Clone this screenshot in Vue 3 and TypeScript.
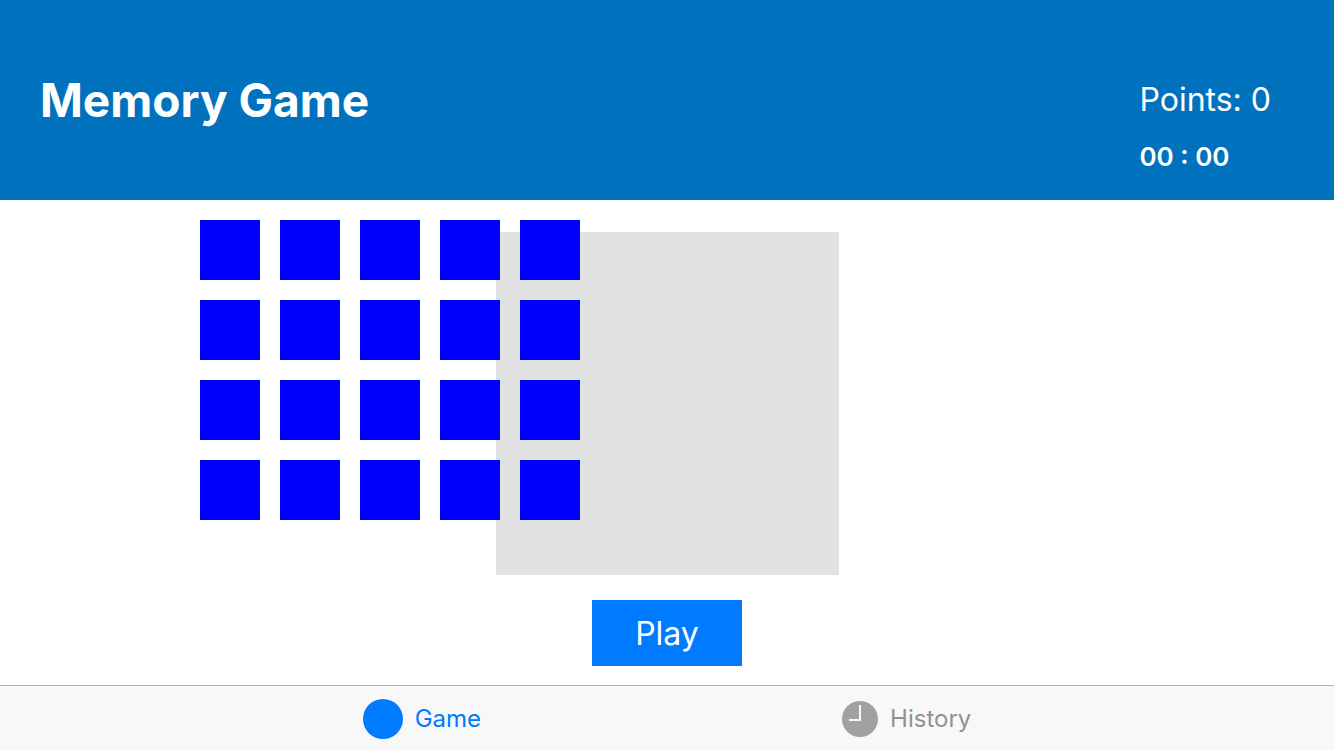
<script setup lang="ts">
import { ref } from 'vue'

const points = ref(0)
const minutes = ref(0)
const seconds = ref(0)
const cardCount = 20
const activeTab = ref<'game' | 'history'>('game')

const pad = (value: number): string => String(value).padStart(2, '0')
</script>

<template>
  <div class="app">
    <header class="header">
      <h1 class="title">Memory Game</h1>
      <div class="status">
        <p class="points">Points: {{ points }}</p>
        <p class="timer">{{ pad(minutes) }} : {{ pad(seconds) }}</p>
      </div>
    </header>

    <main class="main">
      <div class="stage">
        <div class="board"></div>
        <div class="cards">
          <button
            v-for="n in cardCount"
            :key="n"
            type="button"
            class="card"
            :aria-label="`Card ${n}`"
          ></button>
        </div>
      </div>
      <button type="button" class="play">Play</button>
    </main>

    <nav class="tabs">
      <button
        type="button"
        class="tab"
        :class="{ active: activeTab === 'game' }"
        @click="activeTab = 'game'"
      >
        <svg class="icon-game" viewBox="0 0 40 40" aria-hidden="true">
          <circle cx="20" cy="20" r="20" fill="currentColor" />
        </svg>
        <span>Game</span>
      </button>
      <button
        type="button"
        class="tab"
        :class="{ active: activeTab === 'history' }"
        @click="activeTab = 'history'"
      >
        <svg class="icon-history" viewBox="0 0 36 36" aria-hidden="true">
          <circle class="clock-face" cx="18" cy="18" r="18" />
          <path d="M18 4V19H7" fill="none" stroke="#f8f8f8" stroke-width="2" />
        </svg>
        <span>History</span>
      </button>
    </nav>
  </div>
</template>

<style>
body {
  margin: 0;
  background: #ffffff;
}
</style>

<style scoped>
.app {
  display: flex;
  flex-direction: column;
  min-height: 100vh;
  font-family: Inter, "Liberation Sans", sans-serif;
}

.app button {
  margin: 0;
  padding: 0;
  border: 0;
  border-radius: 0;
  font-family: inherit;
  cursor: pointer;
}

.header {
  display: flex;
  justify-content: space-between;
  box-sizing: border-box;
  min-height: 200px;
  padding: 72px 63px 14px 40px;
  background: #0072bd;
  color: #ffffff;
}

.title {
  margin: 0;
  font-size: 46px;
  line-height: 56px;
  font-weight: 700;
}

.points {
  margin: 0;
  font-size: 32px;
  line-height: 56px;
  font-weight: 400;
}

.timer {
  margin: 0;
  font-size: 26px;
  line-height: 58px;
  font-weight: 600;
}

.main {
  display: flex;
  flex: 1;
  flex-direction: column;
  align-items: center;
  padding: 20px 0 19px;
}

/* The board and the cards share one grid cell, cards on top. */
.stage {
  display: grid;
  width: 100%;
  margin-bottom: 25px;
}

.board {
  grid-area: 1 / 1;
  justify-self: center;
  width: 343px;
  height: 343px;
  margin-top: 12px;
  background: #e1e1e1;
}

.cards {
  display: grid;
  grid-area: 1 / 1;
  grid-template-columns: repeat(5, 60px);
  grid-auto-rows: 60px;
  align-self: start;
  justify-self: start;
  gap: 20px;
  margin-left: 200px;
}

.card {
  background: #0000ff;
}

.app .play {
  width: 150px;
  height: 66px;
  background: #007aff;
  color: #ffffff;
  font-size: 32px;
  font-weight: 400;
}

.tabs {
  display: flex;
  justify-content: center;
  gap: 361px;
  box-sizing: border-box;
  height: 65px;
  padding-top: 2px;
  border-top: 1px solid #b2b2b2;
  background: #f8f8f8;
}

.tab {
  display: flex;
  align-items: center;
  gap: 12px;
  background: transparent;
  color: #929292;
  font-size: 24px;
  line-height: 32px;
}

.tab.active {
  color: #007aff;
}

.icon-game {
  width: 40px;
  height: 40px;
}

.icon-history {
  width: 36px;
  height: 36px;
}

.clock-face {
  fill: #a1a1a1;
}

.active .clock-face {
  fill: currentColor;
}
</style>
